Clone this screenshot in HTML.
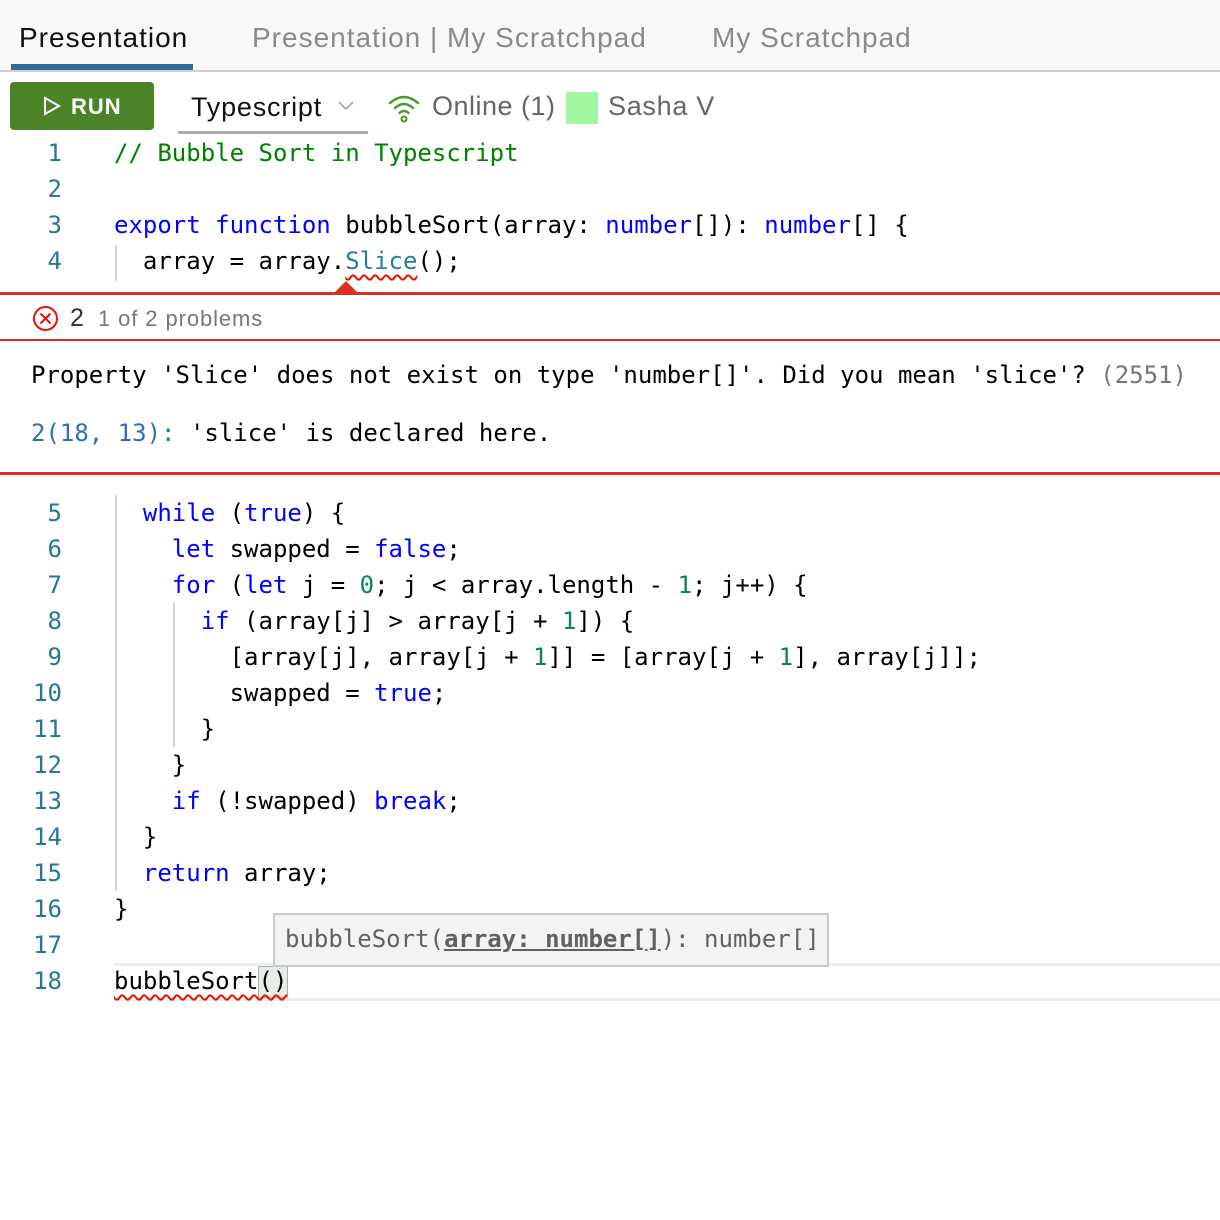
<!DOCTYPE html>
<html><head><style>
body{margin:0;width:1220px;height:1220px;background:#fff;position:relative;overflow:hidden;font-family:"Liberation Sans",sans-serif}
.tabs{position:absolute;left:0;top:0;width:1220px;height:70px;background:#f8f8f9;border-bottom:2px solid #d0d0d0}
.tab{position:absolute;top:22px;font-size:28px;letter-spacing:1px;color:#8a8a8a}
.ul{position:absolute;left:11px;top:64px;width:182px;height:6px;background:#2d6e9a}
.run{position:absolute;left:10px;top:82px;width:144px;height:48px;background:#4a8328;border-radius:4px;color:#fff;font-size:22px;font-weight:bold;letter-spacing:1px}
.code{font-family:"DejaVu Sans Mono","Liberation Mono",monospace;font-size:24px;white-space:pre}
.ln{position:absolute;width:62px;text-align:right;color:#237893;left:0}
.l{position:absolute;left:114px;color:#000}
.k{color:#0000ff}.n{color:#098658}.c{color:#008000}
.g{position:absolute;width:2px;background:#d3d3d3}
.sq{text-decoration:underline wavy #e51400;text-decoration-skip-ink:none;text-underline-offset:5px;text-decoration-thickness:1.5px}
</style></head><body>
<div class="tabs">
<div class="tab" style="left:19px;color:#111">Presentation</div>
<div class="tab" style="left:252px">Presentation | My Scratchpad</div>
<div class="tab" style="left:712px">My Scratchpad</div>
<div class="ul"></div>
</div>
<div class="run"><svg style="position:absolute;left:33px;top:14px" width="18" height="20" viewBox="0 0 18 20"><path d="M2 2 L16 10 L2 18 Z" fill="none" stroke="#fff" stroke-width="2"/></svg><span style="position:absolute;left:61px;top:12px">RUN</span></div>
<div style="position:absolute;left:191px;top:92px;font-size:27px;letter-spacing:0.8px;color:#111">Typescript</div>
<svg style="position:absolute;left:337px;top:100px" width="18" height="12"><path d="M2 2 L9 9 L16 2" fill="none" stroke="#aaa" stroke-width="1.8"/></svg>
<div style="position:absolute;left:178px;top:131px;width:190px;height:3px;background:#aaa"></div>
<svg style="position:absolute;left:386px;top:93px" width="36" height="30" viewBox="0 0 36 30"><g fill="none" stroke="#4a9a2a" stroke-width="2.5" stroke-linecap="round"><path d="M4 10 Q18 -2 32 10"/><path d="M9 15 Q18 7 27 15"/><path d="M13.5 20 Q18 16 22.5 20"/></g><circle cx="18" cy="26" r="2.5" fill="none" stroke="#4a9a2a" stroke-width="2"/></svg>
<div style="position:absolute;left:432px;top:91px;font-size:27px;letter-spacing:0.5px;color:#666">Online (1)</div>
<div style="position:absolute;left:566px;top:92px;width:32px;height:32px;background:#a0f8a0"></div>
<div style="position:absolute;left:608px;top:91px;font-size:27px;letter-spacing:0.7px;color:#666">Sasha V</div>

<div class="code">
<div class="g" style="left:115px;top:245px;height:36px"></div>
<div class="g" style="left:115px;top:495px;height:396px"></div>
<div class="g" style="left:173px;top:603px;height:144px"></div>

<div class="ln" style="top:139px">1</div><div class="l c" style="top:139px">// Bubble Sort in Typescript</div>
<div class="ln" style="top:175px">2</div>
<div class="ln" style="top:211px">3</div><div class="l" style="top:211px"><span class="k">export</span> <span class="k">function</span> bubbleSort(array: <span class="k">number</span>[]): <span class="k">number</span>[] {</div>
<div class="ln" style="top:247px">4</div><div class="l" style="top:247px">  array = array.<span class="sq" style="color:#267f99">Slice</span>();</div>

<div class="ln" style="top:499px">5</div><div class="l" style="top:499px">  <span class="k">while</span> (<span class="k">true</span>) {</div>
<div class="ln" style="top:535px">6</div><div class="l" style="top:535px">    <span class="k">let</span> swapped = <span class="k">false</span>;</div>
<div class="ln" style="top:571px">7</div><div class="l" style="top:571px">    <span class="k">for</span> (<span class="k">let</span> j = <span class="n">0</span>; j &lt; array.length - <span class="n">1</span>; j++) {</div>
<div class="ln" style="top:607px">8</div><div class="l" style="top:607px">      <span class="k">if</span> (array[j] &gt; array[j + <span class="n">1</span>]) {</div>
<div class="ln" style="top:643px">9</div><div class="l" style="top:643px">        [array[j], array[j + <span class="n">1</span>]] = [array[j + <span class="n">1</span>], array[j]];</div>
<div class="ln" style="top:679px">10</div><div class="l" style="top:679px">        swapped = <span class="k">true</span>;</div>
<div class="ln" style="top:715px">11</div><div class="l" style="top:715px">      }</div>
<div class="ln" style="top:751px">12</div><div class="l" style="top:751px">    }</div>
<div class="ln" style="top:787px">13</div><div class="l" style="top:787px">    <span class="k">if</span> (!swapped) <span class="k">break</span>;</div>
<div class="ln" style="top:823px">14</div><div class="l" style="top:823px">  }</div>
<div class="ln" style="top:859px">15</div><div class="l" style="top:859px">  <span class="k">return</span> array;</div>
<div class="ln" style="top:895px">16</div><div class="l" style="top:895px">}</div>
<div class="ln" style="top:931px">17</div>
<div style="position:absolute;left:114px;top:963px;width:1106px;height:32px;border-top:3px solid #eee;border-bottom:3px solid #eee"></div>
<div style="position:absolute;left:258px;top:966px;width:28px;height:30px;background:#e6ece6;border:1px solid #b0b0b0"></div>
<div class="ln" style="top:967px">18</div><div class="l" style="top:967px"><span class="sq">bubbleSort()</span></div>
<div style="position:absolute;left:273px;top:913px;width:556px;height:54px;background:#f3f3f3;border:2px solid #c8c8c8;box-sizing:border-box;color:#616161;padding:10px 0 0 10px">bubbleSort(<b style="text-decoration:underline">array: number[]</b>): number[]</div>
</div>

<div style="position:absolute;left:0;top:292px;width:1220px;height:183px;border-top:3px solid #d93025;border-bottom:3px solid #d93025;box-sizing:border-box"></div>
<svg style="position:absolute;left:334px;top:281px" width="24" height="12"><path d="M0 12 L12 0 L24 12 Z" fill="#d93025"/></svg>
<div style="position:absolute;left:0;top:339px;width:1220px;height:2px;background:#d93025"></div>
<svg style="position:absolute;left:32px;top:305px" width="27" height="27"><circle cx="13.5" cy="13.5" r="11.5" fill="none" stroke="#e51400" stroke-width="2"/><path d="M8.5 8.5 L18.5 18.5 M18.5 8.5 L8.5 18.5" stroke="#e51400" stroke-width="2"/></svg>
<div style="position:absolute;left:70px;top:304px;font-size:25px;color:#333">2</div>
<div style="position:absolute;left:98px;top:306px;font-size:22px;letter-spacing:0.9px;color:#777">1 of 2 problems</div>
<div class="code" style="position:absolute;left:31px;top:361px">Property 'Slice' does not exist on type 'number[]'. Did you mean 'slice'? <span style="color:#777">(2551)</span></div>
<div class="code" style="position:absolute;left:31px;top:419px"><span style="color:#2e6eb5">2(18, 13):</span> 'slice' is declared here.</div>
</body></html>
